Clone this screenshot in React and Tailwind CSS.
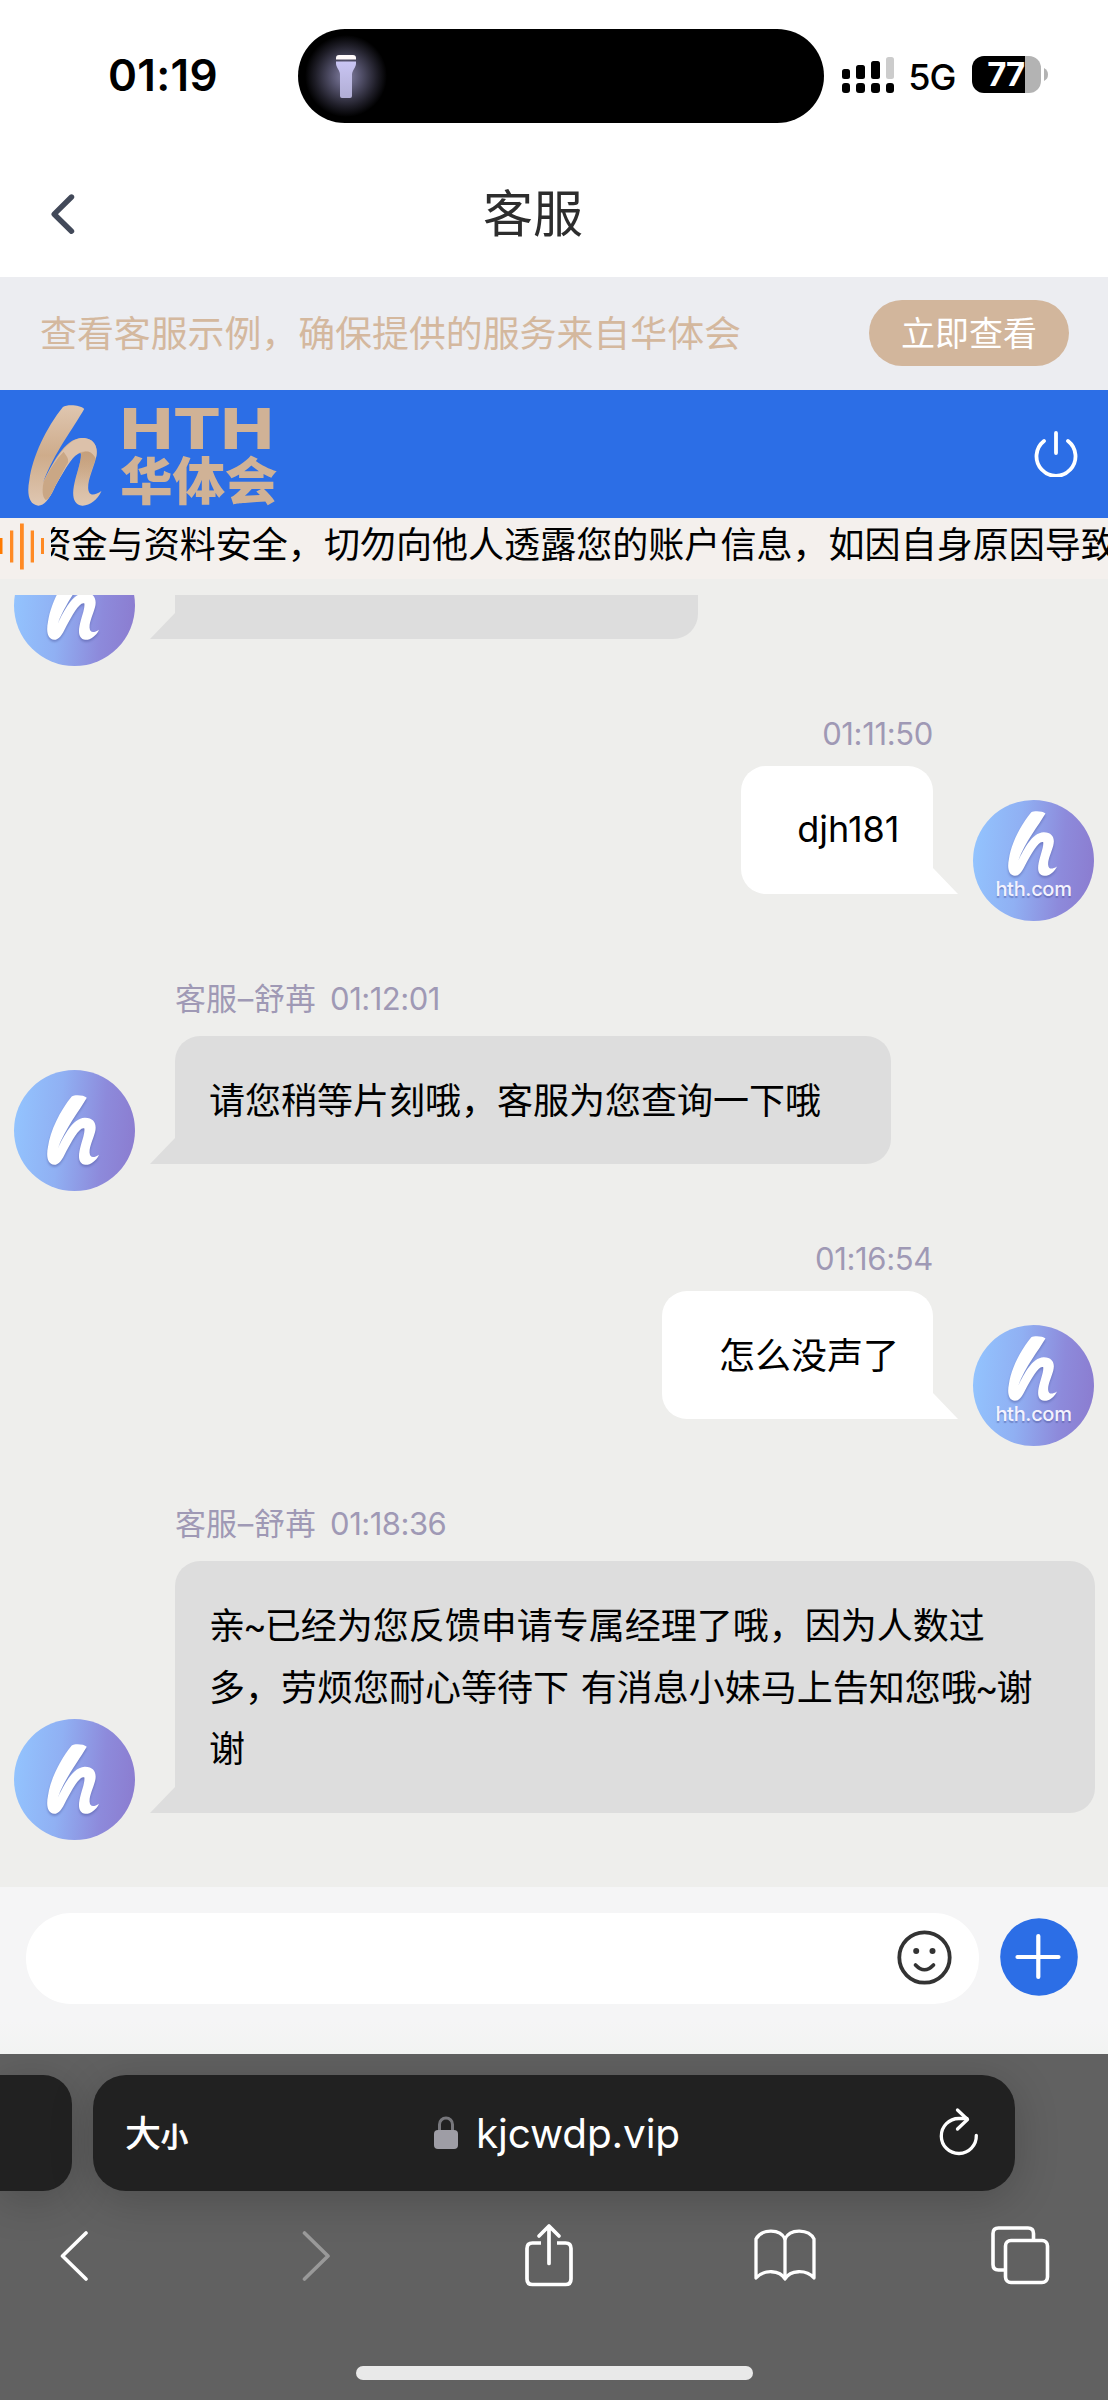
import React from "react";

const H_PATH =
  "M188 50C200 42 240 43 252 56C222 110 160 190 129 276C156 220 192 146 243 143C284 142 296 172 287 206C278 240 263 268 264 295C266 320 284 316 304 303C292 330 268 348 246 347C221 345 215 320 221 288C228 250 244 215 242 190C222 180 192 240 165 288C146 330 132 347 114 347C85 344 79 310 87 270C96 200 138 112 188 50Z";

function StatusBar() {
  const bars = [10, 14, 18, 22];
  return (
    <div className="flex h-[151px] items-start">
      <div className="ml-[108px] mt-[49px] w-[189.500px] text-[44px] font-semibold leading-[52px] tracking-[0.300px] text-black">
        01:19
      </div>
      <div className="mt-[29px] h-[94px] w-[526px] rounded-full bg-black">
        <svg width="120" height="94" viewBox="0 0 120 94">
          <defs>
            <radialGradient id="glow">
              <stop offset="0" stopColor="#8582a6" />
              <stop offset="0.35" stopColor="#55536d" />
              <stop offset="0.75" stopColor="#1f1e28" />
              <stop offset="1" stopColor="#000" />
            </radialGradient>
            <linearGradient id="torch" x1="0" y1="0" x2="0" y2="1">
              <stop offset="0" stopColor="#c9c5f3" />
              <stop offset="1" stopColor="#b0add4" />
            </linearGradient>
          </defs>
          <circle cx="48" cy="47" r="41" fill="url(#glow)" />
          <path d="M38 30.500V29q0-3 3-3h14q3 0 3 3v1.500z" fill="#fffafb" />
          <path d="M38 32.500h20v2c0 4-4 7-4 11V67q0 2-2 2h-8q-2 0-2-2V45.500c0-4-4-7-4-11z" fill="url(#torch)" />
        </svg>
      </div>
      <div className="ml-[18px] mt-[55px] flex h-[38px] items-end gap-[6px]">
        {bars.map((h, i) => (
          <div key={h} className="flex flex-col gap-[4.500px]">
            <div
              className={i === 3 ? "w-[8.700px] rounded-[2.500px] bg-[#cccccc]" : "w-[8.700px] rounded-[2.500px] bg-black"}
              style={{ height: h }}
            />
            <div className="h-[10px] w-[8.700px] rounded-[3px] bg-black" />
          </div>
        ))}
      </div>
      <div className="ml-[14px] mt-[54px] w-[64px] text-[36px] font-medium leading-[46px] tracking-[-1px] text-black">5G</div>
      <div className="mt-[56px] flex h-[37px] w-[69px] items-center rounded-[12px] bg-[linear-gradient(to_right,#000_53px,#b3b3b3_53px)]">
        <span className="pl-[15px] text-[33px] font-bold leading-[37px] tracking-[-1px] text-white">77</span>
      </div>
      <svg className="ml-[2px] mt-[68px]" width="5" height="13" viewBox="0 0 5 13">
        <path d="M1 0q4 2 4 6.500T1 13z" fill="#b3b3b3" />
      </svg>
    </div>
  );
}

function Avatar({ named }) {
  return (
    <div className="h-[121px] w-[121px] shrink-0 rounded-full bg-[linear-gradient(95deg,#93c5ff_0%,#90b0f3_38%,#8d8adb_72%,#8b7bcf_100%)]">
      <div className={named ? "flex flex-col items-center pt-[11px]" : "flex flex-col items-center pt-[25px]"}>
        <svg
          width={named ? 49 : 52}
          height={named ? 65 : 70}
          viewBox="83 44 221 304"
          preserveAspectRatio="none"
          className="-ml-[3px] overflow-visible drop-shadow-[0_2px_1px_rgba(70,80,150,0.45)]"
        >
          <path d={H_PATH} fill="#fff" />
        </svg>
        {named && (
          <span className="text-[20px] font-medium leading-[26px] tracking-[-0.300px] text-[#f3f2fd] [text-shadow:0_2px_1px_rgba(70,80,150,0.45)]">
            hth.com
          </span>
        )}
      </div>
    </div>
  );
}

function Incoming({ label, children, wide }) {
  return (
    <div className="mt-[54.500px] flex items-end pl-[14px]">
      <Avatar />
      <div className="ml-[40px] pb-[27px]">
        <div className="mb-[14px] text-[31px] leading-[46px] text-[#9f99b5]">{label}</div>
        <div
          className={
            wide
              ? "relative w-[920px] rounded-[25px] rounded-bl-none bg-[#dddddd] px-[34px] pb-[31.500px] pt-[35.500px] text-[36px] leading-[61.600px] text-black"
              : "relative w-[715.500px] rounded-[25px] rounded-bl-none bg-[#dddddd] px-[34px] pb-[31.500px] pt-[35.500px] text-[36px] leading-[61.600px] text-black"
          }
        >
          {children}
          <svg className="absolute bottom-0 -left-[25px]" width="26" height="26" viewBox="0 0 26 26">
            <path d="M25 0h1v26H0z" fill="#dddddd" />
          </svg>
        </div>
      </div>
    </div>
  );
}

function Outgoing({ time, children, latin }) {
  return (
    <div className="mt-[44.500px] flex items-end justify-end pr-[14px]">
      <div className="mr-[40px] flex flex-col items-end pb-[27px]">
        <div className="mb-[9px] text-[31px] leading-[46px] tracking-[-0.350px] text-[#9f99b5]">{time}</div>
        <div
          className={
            latin
              ? "relative rounded-[25px] rounded-br-none bg-white py-[33.500px] pl-[56.500px] pr-[33.500px] text-[36px] leading-[61.600px] text-black"
              : "relative rounded-[25px] rounded-br-none bg-white pb-[31.500px] pl-[57px] pr-[34px] pt-[35.500px] text-[36px] leading-[61.600px] text-black"
          }
        >
          {children}
          <svg className="absolute bottom-0 -right-[25px]" width="26" height="26" viewBox="0 0 26 26">
            <path d="M0 0h1l25 26H0z" fill="#fff" />
          </svg>
        </div>
      </div>
      <Avatar named />
    </div>
  );
}

function AgentLabel({ time }) {
  return (
    <span className="whitespace-pre">
      客服<span className="mx-[0.800px]">–</span>舒苒<span className="ml-[14px] tracking-[-0.500px]">{time}</span>
    </span>
  );
}

function Tilde() {
  return <span className="-mx-[2px]">~</span>;
}

export default function App() {
  return (
    <div className="h-[2400px] w-[1108px] overflow-hidden bg-white font-['Inter','Noto_Sans_CJK_SC',sans-serif]">
      <StatusBar />

      <div className="flex h-[125.500px] items-center">
        <svg className="ml-[49px] w-[26px]" width="26" height="42" viewBox="0 0 26 42">
          <path d="M22.500 4L5.200 21.200l17.300 17" fill="none" stroke="#424959" strokeWidth="5.400" strokeLinecap="round" strokeLinejoin="round" />
        </svg>
        <h1 className="flex-1 pr-[117px] pt-[1px] text-center text-[50px] leading-[60px] text-[#2d2d2d]">客服</h1>
      </div>

      <div className="flex h-[113px] items-center justify-between bg-[#ecedf1] pl-[40px] pr-[39px]">
        <span className="whitespace-nowrap pt-[1px] text-[36.900px] text-[#d4b89e]">查看客服示例，确保提供的服务来自华体会</span>
        <span className="flex h-[66px] w-[200px] items-center justify-center rounded-full bg-[#d2b69c] text-[34px] text-white">
          立即查看
        </span>
      </div>

      <div className="flex h-[128px] items-start bg-[#2c6ee6]">
        <svg className="ml-[28px] mt-[15px]" width="73.500" height="101" viewBox="83 44 221 304">
          <defs>
            <linearGradient id="gold" x1="0" y1="0" x2="0" y2="1">
              <stop offset="0" stopColor="#dfc6b0" />
              <stop offset="0.5" stopColor="#ceac8b" />
              <stop offset="1" stopColor="#dfc7b2" />
            </linearGradient>
            <linearGradient id="gold2" x1="0" y1="0" x2="0" y2="1">
              <stop offset="0" stopColor="#c59f7b" />
              <stop offset="1" stopColor="#c7a482" stopOpacity="0" />
            </linearGradient>
          </defs>
          <path d={H_PATH} fill="url(#gold)" />
          <path d="M130 275C158 220 195 150 243 143C284 142 296 172 287 206C280 188 250 175 232 192C215 200 190 245 165 288C152 318 142 330 136 330C124 318 126 295 130 275Z" fill="#dcc1aa" />
          <path d="M130 275C150 235 170 205 190 185C200 200 206 205 203 218C190 240 175 270 165 288C152 318 142 330 136 330C124 318 126 295 130 275Z" fill="#caa785" />
          <path d="M243 190C260 178 278 185 286 206C276 240 262 268 264 292L222 288C228 250 244 215 243 190Z" fill="url(#gold2)" />
        </svg>
        <div className="ml-[18px] mt-[17px] flex w-[154px] flex-col text-[#d0b296]">
          <span className="block h-[43px] origin-left scale-x-[1.240] whitespace-nowrap text-[57px] font-extrabold leading-[43px]">HTH</span>
          <span className="-mt-[2px] block h-[60px] origin-left scale-x-[1.030] whitespace-nowrap font-['Noto_Sans_CJK_SC',sans-serif] text-[51px] font-black leading-[60px]">
            华体会
          </span>
        </div>
        <svg className="ml-auto mr-[29px] mt-[37px]" width="46" height="50" viewBox="0 0 46 50">
          <path d="M11 14A19.500 19.500 0 1 0 35 14M23 6v20" fill="none" stroke="#fff" strokeWidth="3.800" strokeLinecap="round" />
        </svg>
      </div>

      <div className="flex h-[61.500px] bg-[#f4f0ed]">
        <svg className="shrink-0" width="51" height="61" viewBox="0 0 51 61">
          <g fill="#ff8a24">
            <rect x="0" y="20" width="2.500" height="16" fill="#ff7a00" />
            <rect x="10" y="12.500" width="3.300" height="32" />
            <rect x="20" y="5.500" width="3.800" height="46" />
            <rect x="30.700" y="12.500" width="3.300" height="32" />
            <rect x="41" y="20" width="3" height="16" />
          </g>
        </svg>
        <div className="flex-1 overflow-hidden">
          <div className="-ml-[15.500px] w-[1120px] whitespace-nowrap pt-[1px] text-[36.050px] leading-[53px] text-black">
            资金与资料安全，切勿向他人透露您的账户信息，如因自身原因导致
          </div>
        </div>
      </div>

      <div className="h-[1308px] overflow-hidden bg-[#eeeeec] pt-[16px]">
        <div className="flex h-[71px] items-end overflow-hidden pl-[14px]">
          <Avatar />
          <div className="relative mb-[27.500px] ml-[40px] h-[128px] w-[523px] rounded-[25px] rounded-bl-none bg-[#dddddd]">
            <svg className="absolute bottom-0 -left-[25px]" width="26" height="26" viewBox="0 0 26 26">
              <path d="M25 0h1v26H0z" fill="#dddddd" />
            </svg>
          </div>
        </div>
        <Outgoing latin time="01:11:50">djh181</Outgoing>
        <Incoming label={<AgentLabel time="01:12:01" />}>请您稍等片刻哦，客服为您查询一下哦</Incoming>
        <Outgoing time="01:16:54">怎么没声了</Outgoing>
        <Incoming wide label={<AgentLabel time="01:18:36" />}>
          <p className="whitespace-nowrap">
            亲<Tilde />已经为您反馈申请专属经理了哦，因为人数过
          </p>
          <p className="whitespace-nowrap">
            多，劳烦您耐心等待下<span className="ml-[1.500px]"> </span>有消息小妹马上告知您哦<Tilde />谢
          </p>
          <p>谢</p>
        </Incoming>
      </div>

      <div className="flex h-[167px] items-start bg-[linear-gradient(#f5f5f6_80%,#f2f3f2_100%)] pt-[26px]">
        <div className="ml-[26px] flex h-[91px] w-[953px] items-center justify-end rounded-[45px] bg-white pr-[27px]">
          <svg className="mb-[3px]" width="55" height="55" viewBox="0 0 55 55" fill="none" stroke="#333" strokeLinecap="round">
            <circle cx="27.500" cy="27.500" r="25.200" strokeWidth="3.800" />
            <circle cx="19.200" cy="21" r="3" fill="#333" stroke="none" />
            <circle cx="35.500" cy="21" r="3" fill="#333" stroke="none" />
            <path d="M18.500 35q9 9.500 18 0" strokeWidth="3.700" />
          </svg>
        </div>
        <svg className="ml-[20.500px] mt-[5px]" width="78" height="78" viewBox="0 0 78 78">
          <circle cx="39" cy="39" r="38.800" fill="#2c6ee6" />
          <path d="M17.500 39h41M38.300 18v41" stroke="#fff" strokeWidth="4.200" strokeLinecap="round" />
        </svg>
      </div>

      <div className="flex h-[346px] flex-col overflow-hidden bg-[#616161] pt-[21px]">
        <div className="flex h-[116px] shrink-0">
          <div className="w-[72px] rounded-r-[29px] bg-[#212121] shadow-[0_8px_45px_rgba(0,0,0,0.2)]" />
          <div className="ml-[21px] flex w-[922px] items-center rounded-[33px] bg-[#212121] text-white shadow-[0_8px_45px_rgba(0,0,0,0.2)]">
            <div className="flex w-[340px] items-baseline pl-[32px] pt-[1px] font-['Noto_Sans_CJK_SC',sans-serif] font-medium">
              <span className="text-[36px] leading-[50px]">大</span>
              <span className="text-[27px] leading-[50px] [-webkit-text-stroke:0.8px_white]">小</span>
            </div>
            <svg width="26" height="36" viewBox="0 0 26 36">
              <path d="M6.500 16V9.500a6.500 6.500 0 0 1 13 0V16" fill="none" stroke="#77777c" strokeWidth="3" />
              <rect x="1" y="15" width="24" height="19" rx="4" fill="#9e9da5" />
            </svg>
            <span className="ml-[17px] pt-[2px] text-[40.500px] leading-[50px] tracking-[-0.150px]">kjcwdp.vip</span>
            <svg className="ml-auto mr-[34px]" width="44" height="52" viewBox="0 0 44 52" fill="none" stroke="#fff" strokeWidth="3.300" strokeLinecap="round" strokeLinejoin="round">
              <path d="M39.300 28.500A17.500 17.500 0 1 1 21.800 11.500H30" />
              <path d="M20.500 3l10 9.500-10 9.500" />
            </svg>
          </div>
        </div>
        <div className="mt-[29px] flex h-[70px] shrink-0 items-center pl-[58px]">
          <svg width="31" height="52" viewBox="0 0 31 52">
            <path d="M28 4L4.500 27 28 50" fill="none" stroke="#fff" strokeWidth="3.600" strokeLinecap="round" strokeLinejoin="round" />
          </svg>
          <svg className="ml-[211px]" width="31" height="52" viewBox="0 0 31 52">
            <path d="M4.500 4L28 27 4.500 50" fill="none" stroke="#999" strokeWidth="3.600" strokeLinecap="round" strokeLinejoin="round" />
          </svg>
          <svg className="ml-[193px]" width="50" height="64" viewBox="0 0 50 64" fill="none" stroke="#fff" strokeWidth="3.700" strokeLinecap="round" strokeLinejoin="round">
            <path d="M17 20H8.500q-5.500 0-5.500 5.500v30.500q0 5.500 5.500 5.500h33q5.500 0 5.500-5.500V25.500q0-5.500-5.500-5.500H33" strokeLinecap="butt" />
            <path d="M25 40.500V3M15 13L25 3l10 10" />
          </svg>
          <svg className="ml-[179px]" width="64" height="56" viewBox="0 0 64 56" fill="none" stroke="#fff" strokeWidth="3.300" strokeLinejoin="round">
            <path d="M32 52C27 43 11 42 3 51V12C8 2 27 1 32 12C37 1 56 2 61 12V51C53 42 37 43 32 52Z" />
            <path d="M32 12v40" />
          </svg>
          <svg className="ml-[173px]" width="60" height="60" viewBox="0 0 60 60" fill="none" stroke="#fff" strokeWidth="3.600" strokeLinejoin="round">
            <path d="M43.500 14V8.500q0-5.500-5.500-5.500H8.500Q3 3 3 8.500v31Q3 45 8.500 45H15" />
            <rect x="15.500" y="15.500" width="42" height="42" rx="5.500" />
          </svg>
        </div>
        <div className="mx-auto mt-[76px] h-[14px] w-[397px] shrink-0 rounded-full bg-[#e9e9e9]" />
      </div>
    </div>
  );
}
